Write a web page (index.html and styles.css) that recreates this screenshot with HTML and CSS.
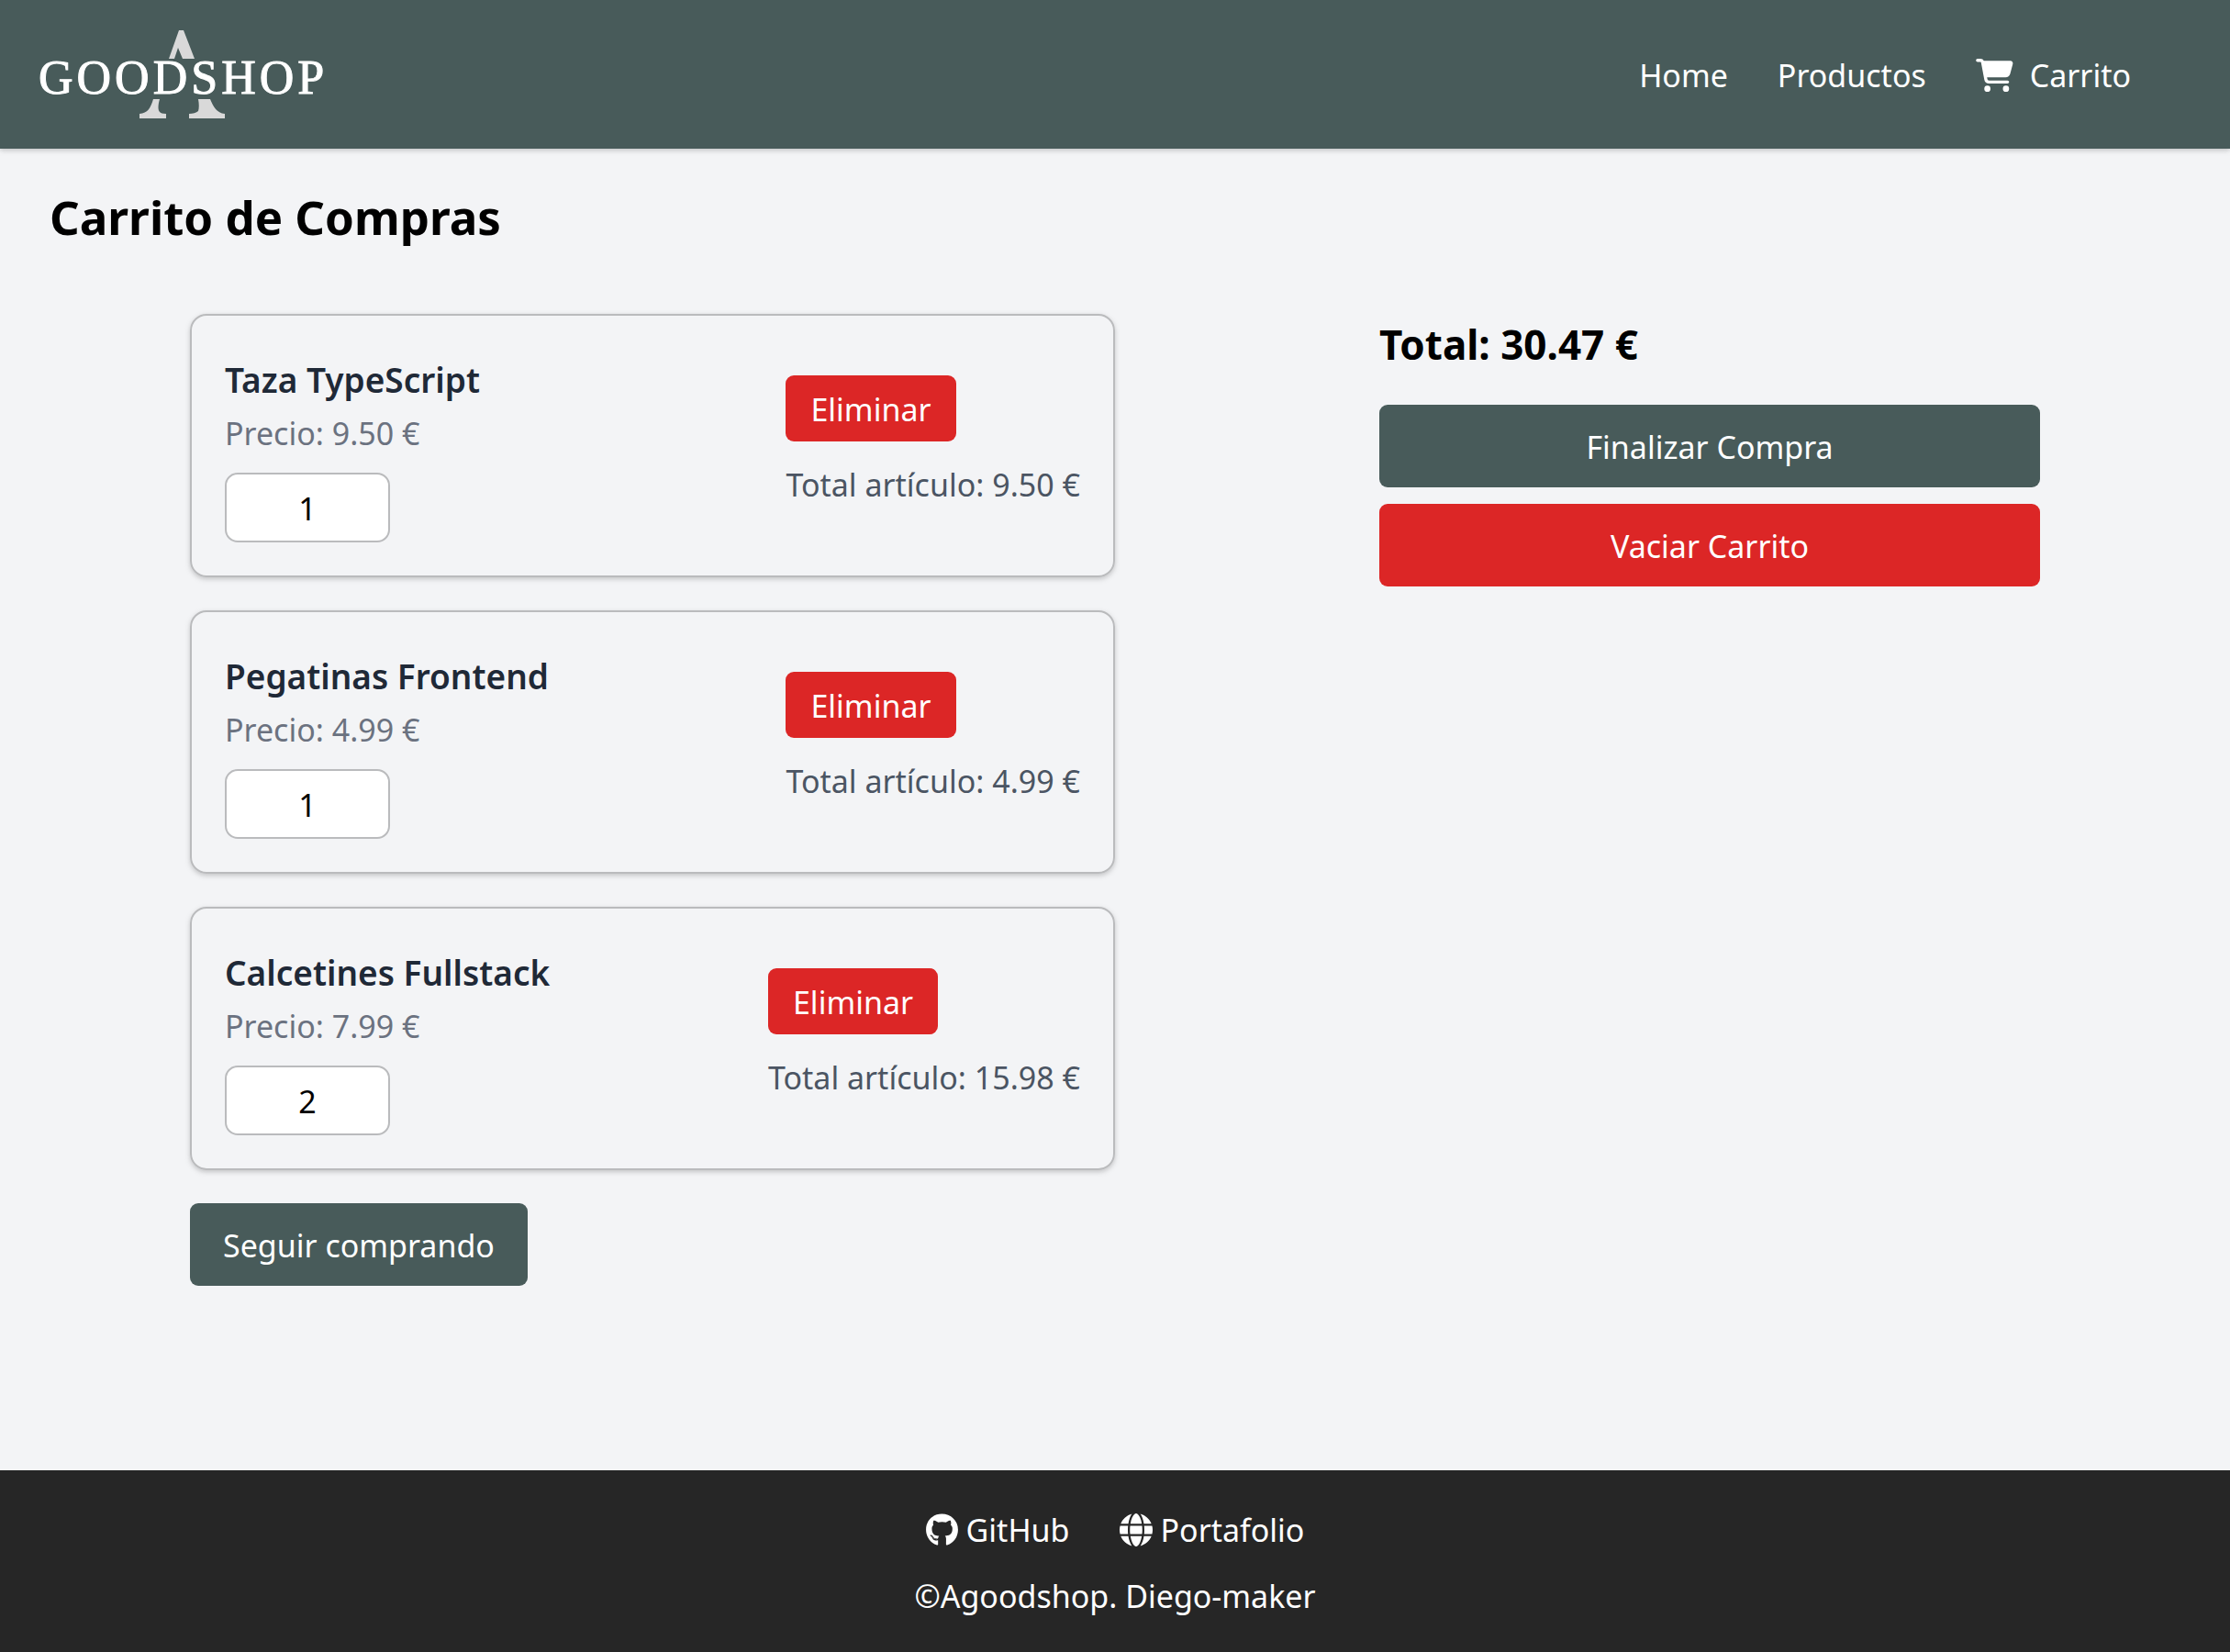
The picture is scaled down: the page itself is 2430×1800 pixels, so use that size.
FILE: index.html
```html
<!DOCTYPE html>
<html lang="es">
<head>
  <meta charset="utf-8">
  <meta name="viewport" content="width=device-width, initial-scale=1">
  <title>Agoodshop - Carrito</title>
  <link rel="stylesheet" href="styles.css">
</head>
<body>
  <header class="site-header">
    <a class="logo" href="#" aria-label="Agoodshop">
      <svg class="logo-art" viewBox="0 0 314 96">
        <g fill="#d9d9d9">
          <path d="M152 0h5l12 31h-13l-5-12-4 12h-6z"/>
          <path d="M124 75h7c-2 7-2 12 0 14 1 1 3 2 7 2v5h-29v-5c9-1 12-6 15-16z"/>
          <path d="M173 75h13c4 9 7 15 16 16v5h-39v-5c4 0 8-1 10-3 1-3 1-8 0-13z"/>
        </g>
        <text class="logo-text" x="-1" y="69">GOODSHOP</text>
      </svg>
    </a>
    <nav class="site-nav">
      <a href="#">Home</a>
      <a href="#">Productos</a>
      <a class="cart-link" href="#">
        <svg class="cart-icon" viewBox="0 0 576 512" aria-hidden="true"><path fill="currentColor" d="M0 24C0 10.700 10.700 0 24 0H69.500c22 0 41.500 12.800 50.600 32h411c26.300 0 45.500 25 38.600 50.400l-41 152.300c-8.500 31.400-37 53.300-69.500 53.300H170.700l5.400 28.500c2.200 11.300 12.100 19.500 23.600 19.500H488c13.300 0 24 10.700 24 24s-10.700 24-24 24H199.700c-34.600 0-64.300-24.600-70.700-58.500L77.400 54.500c-.7-3.800-4-6.500-7.900-6.500H24C10.700 48 0 37.300 0 24zM128 464a48 48 0 1 1 96 0 48 48 0 1 1 -96 0zm336-48a48 48 0 1 1 0 96 48 48 0 1 1 0-96z"/></svg>
        Carrito
      </a>
    </nav>
  </header>

  <main class="page">
    <h1 class="page-title">Carrito de Compras</h1>
    <div class="cart">
      <section class="cart-items">
        <article class="item">
          <div class="item-info">
            <h2 class="item-name">Taza TypeScript</h2>
            <p class="item-price">Precio: 9.50 €</p>
            <input class="item-qty" type="number" min="1" value="1" aria-label="Cantidad de Taza TypeScript">
          </div>
          <div class="item-side">
            <button class="btn btn-small btn-danger" type="button">Eliminar</button>
            <p class="item-total">Total artículo: 9.50 €</p>
          </div>
        </article>
        <article class="item">
          <div class="item-info">
            <h2 class="item-name">Pegatinas Frontend</h2>
            <p class="item-price">Precio: 4.99 €</p>
            <input class="item-qty" type="number" min="1" value="1" aria-label="Cantidad de Pegatinas Frontend">
          </div>
          <div class="item-side">
            <button class="btn btn-small btn-danger" type="button">Eliminar</button>
            <p class="item-total">Total artículo: 4.99 €</p>
          </div>
        </article>
        <article class="item">
          <div class="item-info">
            <h2 class="item-name">Calcetines Fullstack</h2>
            <p class="item-price">Precio: 7.99 €</p>
            <input class="item-qty" type="number" min="1" value="2" aria-label="Cantidad de Calcetines Fullstack">
          </div>
          <div class="item-side">
            <button class="btn btn-small btn-danger" type="button">Eliminar</button>
            <p class="item-total">Total artículo: 15.98 €</p>
          </div>
        </article>
        <button class="btn btn-primary" type="button">Seguir comprando</button>
      </section>
      <aside class="summary">
        <h2 class="summary-total">Total: 30.47 €</h2>
        <button class="btn btn-primary" type="button">Finalizar Compra</button>
        <button class="btn btn-danger" type="button">Vaciar Carrito</button>
      </aside>
    </div>
  </main>

  <footer class="site-footer">
    <div class="footer-links">
      <a class="footer-link" href="#">
        <svg class="github-icon" viewBox="0 0 496 512" aria-hidden="true"><path fill="currentColor" d="M165.900 397.400c0 2-2.300 3.600-5.200 3.600-3.300.3-5.600-1.300-5.600-3.600 0-2 2.300-3.600 5.200-3.600 3-.3 5.600 1.300 5.600 3.600zm-31.100-4.500c-.7 2 1.300 4.300 4.300 4.900 2.600 1 5.600 0 6.200-2s-1.300-4.300-4.300-5.200c-2.600-.7-5.500.3-6.200 2.300zm44.200-1.700c-2.900.7-4.900 2.600-4.600 4.900.3 2 2.900 3.300 5.900 2.600 2.900-.7 4.900-2.600 4.600-4.600-.3-1.900-3-3.200-5.900-2.900zM244.800 8C106.100 8 0 113.300 0 252c0 110.900 69.800 205.800 169.500 239.200 12.800 2.300 17.300-5.600 17.300-12.100 0-6.200-.3-40.400-.3-61.400 0 0-70 15-84.700-29.800 0 0-11.400-29.100-27.800-36.600 0 0-22.900-15.700 1.600-15.400 0 0 24.900 2 38.600 25.800 21.900 38.600 58.600 27.500 72.900 20.900 2.300-16 8.800-27.100 16-33.700-55.900-6.200-112.300-14.300-112.300-110.500 0-27.500 7.600-41.300 23.600-58.900-2.600-6.500-11.100-33.300 2.600-67.900 20.900-6.500 69 27 69 27 20-5.600 41.500-8.500 62.800-8.500s42.800 2.900 62.800 8.500c0 0 48.100-33.600 69-27 13.700 34.700 5.200 61.400 2.600 67.900 16 17.700 25.800 31.500 25.800 58.900 0 96.500-58.900 104.200-114.800 110.500 9.200 7.900 17 22.900 17 46.400 0 33.700-.3 75.400-.3 83.600 0 6.500 4.600 14.400 17.300 12.100C428.200 457.800 496 362.900 496 252 496 113.300 383.500 8 244.800 8zM97.200 352.900c-1.300 1-1 3.300.7 5.200 1.600 1.600 3.900 2.300 5.200 1 1.300-1 1-3.300-.7-5.200-1.600-1.600-3.900-2.300-5.200-1zm-10.800-8.100c-.7 1.300.3 2.900 2.300 3.900 1.600 1 3.600.7 4.300-.7.7-1.300-.3-2.900-2.300-3.900-2-.6-3.600-.3-4.300.7zm32.400 35.600c-1.600 1.300-1 4.300 1.300 6.200 2.300 2.300 5.200 2.600 6.500 1 1.300-1.300.7-4.300-1.300-6.200-2.200-2.300-5.200-2.600-6.500-1zm-11.400-14.700c-1.600 1-1.600 3.600 0 5.900 1.600 2.300 4.300 3.300 5.600 2.300 1.600-1.300 1.600-3.900 0-6.200-1.400-2.300-4-3.300-5.600-2z"/></svg>
        GitHub
      </a>
      <a class="footer-link" href="#">
        <svg class="globe-icon" viewBox="0 0 512 512" aria-hidden="true"><path fill="currentColor" d="M352 256c0 22.200-1.200 43.600-3.300 64H163.300c-2.200-20.400-3.300-41.800-3.300-64s1.200-43.600 3.300-64H348.700c2.200 20.400 3.300 41.800 3.300 64zm28.800-64H503.900c5.300 20.500 8.100 41.900 8.100 64s-2.800 43.500-8.100 64H380.800c2.100-20.600 3.200-42 3.200-64s-1.100-43.400-3.200-64zm112.600-32H376.700c-10-63.900-29.800-117.400-55.300-151.600c78.300 20.700 142 77.500 171.900 151.600zm-149.100 0H167.700c6.100-36.400 15.500-68.600 27-94.700c10.500-23.600 22.200-40.700 33.500-51.500C239.400 3.200 248.700 0 256 0s16.600 3.200 27.800 13.800c11.300 10.800 23 27.900 33.500 51.500c11.600 26 20.900 58.200 27 94.700zm-209 0H18.600C48.600 85.900 112.200 29.100 190.600 8.400C165.100 42.600 145.300 96.100 135.300 160zM8.100 192H131.200c-2.100 20.600-3.200 42-3.200 64s1.100 43.400 3.200 64H8.100C2.800 299.500 0 278.100 0 256s2.800-43.500 8.100-64zM194.700 446.600c-11.600-26-20.900-58.200-27-94.600H344.300c-6.100 36.400-15.500 68.600-27 94.600c-10.500 23.600-22.200 40.700-33.500 51.500C272.600 508.800 263.300 512 256 512s-16.600-3.200-27.800-13.800c-11.300-10.800-23-27.900-33.500-51.500zM135.300 352c10 63.900 29.800 117.400 55.300 151.600C112.200 482.900 48.600 426.100 18.600 352H135.300zm358.100 0c-30 74.100-93.600 130.900-171.900 151.600c25.500-34.200 45.200-87.700 55.300-151.600H493.400z"/></svg>
        Portafolio
      </a>
    </div>
    <p class="copyright">©Agoodshop. Diego-maker</p>
  </footer>
</body>
</html>
```

FILE: styles.css
```css
*,
*::before,
*::after {
  box-sizing: border-box;
}

body {
  margin: 0;
  min-height: 100vh;
  display: flex;
  flex-direction: column;
  background: #f3f4f6;
  color: #000;
  font-family: "Noto Sans", "Open Sans", sans-serif;
  font-size: 34px;
  line-height: 54px;
}

h1,
h2,
p {
  margin: 0;
}

a {
  color: inherit;
  text-decoration: none;
}

svg {
  display: block;
  flex: none;
}

/* Header */
.site-header {
  display: flex;
  align-items: center;
  justify-content: space-between;
  padding: 33px 108px 33px 43px;
  background: #485b5a;
  color: #fff;
  box-shadow: 0 2px 7px rgba(0, 0, 0, 0.1), 0 2px 4px rgba(0, 0, 0, 0.1);
}

.logo-art {
  width: 314px;
  height: 96px;
  overflow: visible;
}

.logo-text {
  fill: #fff;
  stroke: #fff;
  stroke-width: 1px;
  font-family: "Liberation Serif", serif;
  font-size: 52px;
  letter-spacing: 4px;
}

.site-nav {
  display: flex;
  gap: 54px;
  padding-top: 2px;
}

.cart-link {
  display: flex;
  align-items: center;
  gap: 18px;
}

.cart-icon {
  width: 41px;
  height: 36px;
}

/* Cart page */
.page {
  flex: 1;
  padding: 38px 54px 36px;
}

.page-title {
  font-size: 51px;
  font-weight: 700;
  line-height: 72px;
}

.cart {
  display: flex;
  justify-content: space-between;
  max-width: 2016px;
  margin: 70px auto 0;
}

.cart-items {
  display: flex;
  flex-direction: column;
  align-items: flex-start;
  gap: 36px;
  flex: 0 1 1008px;
}

.item {
  display: flex;
  align-items: center;
  justify-content: space-between;
  width: 100%;
  padding: 36px;
  border: 2px solid #babbbd;
  border-radius: 18px;
  box-shadow: 0 2px 7px rgba(0, 0, 0, 0.1), 0 2px 4px rgba(0, 0, 0, 0.1);
}

.item-name {
  padding-top: 2px;
  color: #1f2937;
  font-size: 37px;
  font-weight: 600;
  line-height: 63px;
}

.item-price {
  color: #6b7280;
}

.item-qty {
  display: block;
  width: 180px;
  height: 76px;
  margin-top: 16px;
  padding: 10px 18px 8px;
  border: 2px solid #babbbd;
  border-radius: 14px;
  background: #fff;
  color: #000;
  font: inherit;
  text-align: center;
  appearance: textfield;
}

.item-qty::-webkit-inner-spin-button {
  appearance: none;
  margin: 0;
}

.item-side {
  display: flex;
  flex-direction: column;
  align-items: flex-start;
  gap: 20px;
  padding-bottom: 7px;
}

.item-total {
  color: #4b5563;
}

.btn {
  padding: 19px 36px 17px;
  border: 0;
  border-radius: 9px;
  color: #fff;
  font: inherit;
  cursor: pointer;
}

.btn-small {
  padding: 10px 27px 8px;
}

.btn-primary {
  background: #485b5a;
}

.btn-danger {
  background: #dc2626;
}

.summary {
  display: flex;
  flex-direction: column;
  gap: 18px;
  flex: 0 1 720px;
}

.summary-total {
  margin-bottom: 16px;
  padding-top: 2px;
  font-size: 44px;
  font-weight: 700;
  line-height: 63px;
}

/* Footer */
.site-footer {
  display: flex;
  flex-direction: column;
  align-items: center;
  gap: 18px;
  padding: 38px 36px 34px;
  background: #262626;
  color: #fff;
}

.footer-links {
  display: flex;
  gap: 54px;
}

.footer-link {
  display: flex;
  align-items: center;
  gap: 9px;
}

.github-icon {
  width: 35px;
  height: 36px;
}

.globe-icon {
  width: 36px;
  height: 36px;
}
```
